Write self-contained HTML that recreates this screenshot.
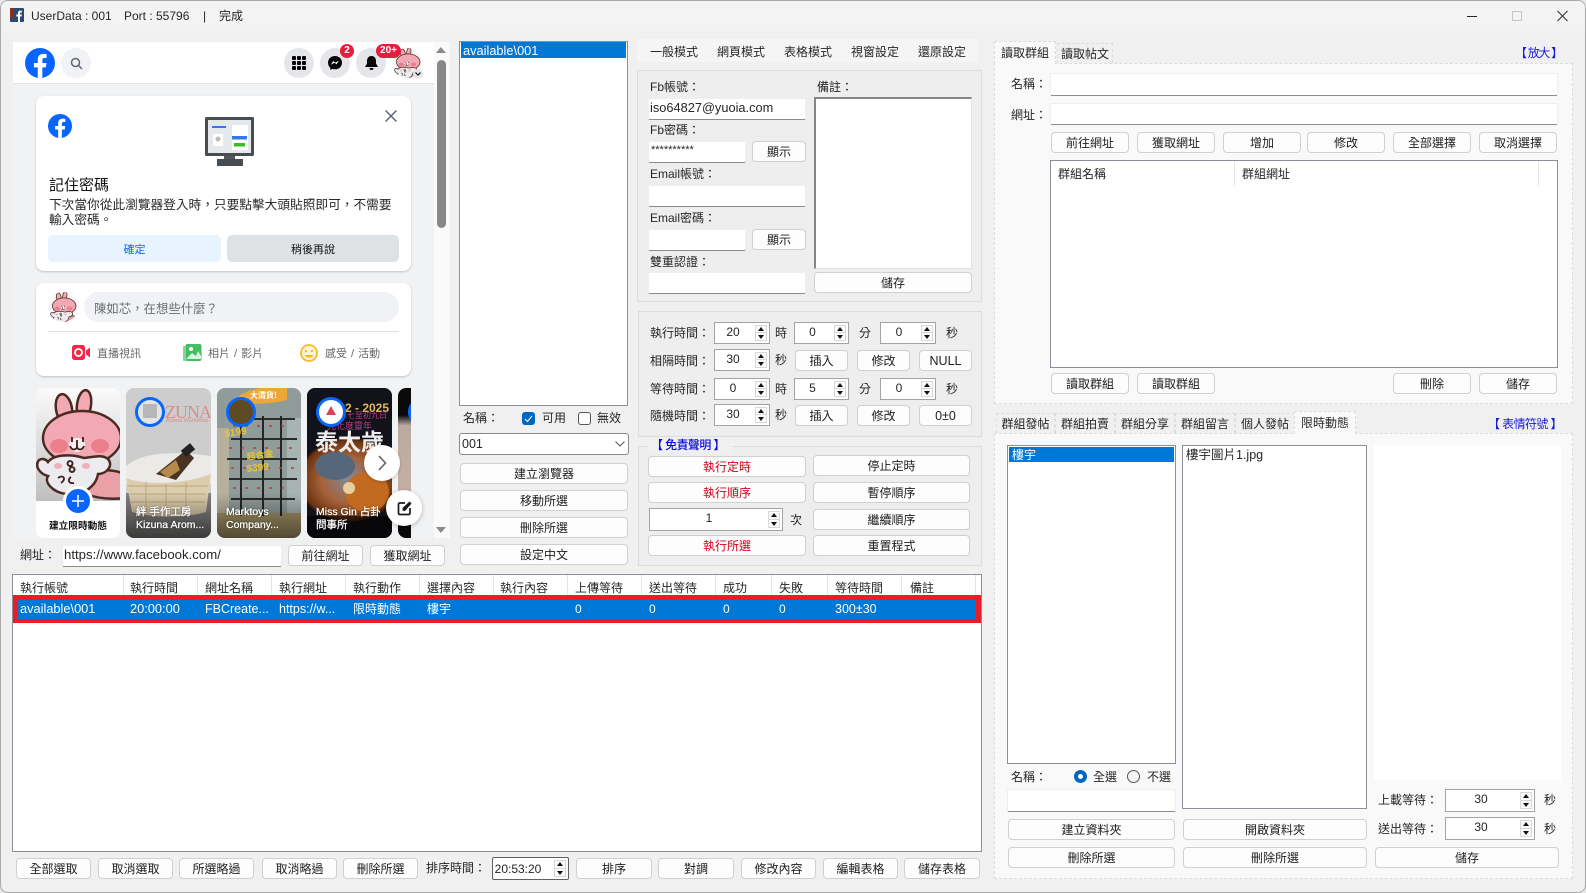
<!DOCTYPE html>
<html lang="zh-Hant"><head><meta charset="utf-8"><title>UserData</title>
<style>
html,body{margin:0;padding:0;background:#e8e8e8}
#w{position:relative;width:1586px;height:893px;overflow:hidden;background:#f0f0f0;font-family:"Liberation Sans","Noto Sans CJK TC",sans-serif;font-size:12px;color:#262626;box-sizing:border-box;border:1px solid #a9a9a9;border-radius:8px 8px 8px 8px}
#in{position:absolute;left:-1px;top:-1px;width:1586px;height:893px}
.a,.t,.b,.i,.s,.p,.tab{position:absolute;box-sizing:border-box}
.t{white-space:nowrap;line-height:16px}
.b{background:#fdfdfd;border:1px solid #d0d0d0;border-radius:4px;text-align:center;display:flex;align-items:center;justify-content:center;white-space:nowrap;color:#1d1d1d}
.r{color:#d0021b}
.i{background:#fff;border:1px solid #efefef;border-bottom:1px solid #8b8b8b;border-radius:2px;padding-left:3px;line-height:18px;white-space:nowrap}
.p{background:#eeeeee;border:1px solid #dcdcdc}
.s{background:#fff;border:1px solid #a3a3a3}
.s span{position:absolute;left:0;top:0;bottom:3px;right:18px;display:flex;align-items:center;justify-content:center}
.s i,.s u{position:absolute;right:2px;width:12px;height:9px;background:#fbfbfb;border:1px solid #d8d8d8;box-sizing:border-box}
.s i{top:2px}.s u{bottom:2px}
.s i:after,.s u:after{content:"";position:absolute;left:2px;width:0;height:0;border-left:3px solid transparent;border-right:3px solid transparent}
.s i:after{top:1px;border-bottom:4px solid #111}
.s u:after{top:2px;border-top:4px solid #111}
.tab{border:1px dashed #dcdcdc;border-bottom:none;background:#f0f0f0;text-align:center;line-height:20px;white-space:nowrap}
.sel{background:#f9f9f9;line-height:22px;z-index:2}
.h{position:absolute;top:575px;width:1px;height:20px;background:#e5e5e5}
.k{color:#fff;position:absolute;top:601px;line-height:16px;white-space:nowrap;font-size:12px}
.ring{position:absolute;border-radius:50%;border:3px solid #0866ff;background:#eee;box-sizing:border-box;width:30px;height:30px}
.fb{color:#65676b;font-size:11px;word-spacing:1px}
.w{color:#fff;font-size:10.500px;-webkit-text-stroke:.25px #fff;text-shadow:0 0 2px #000a}
</style></head><body>
<div id="w"><div id="in">

<!-- title bar -->
<div class="a" style="left:0;top:0;width:1586px;height:31px;background:#f3f3f3"></div>
<svg class="a" style="left:10px;top:8px" width="14" height="14"><rect width="14" height="14" rx="1" fill="#2b4a72"/><rect width="3" height="10" fill="#8c2f1e"/><path d="M8 14V8.500H6.300V6.400H8V5C8 3.400 9 2.600 10.300 2.600H11.800V4.600H10.800C10.100 4.600 10 5 10 5.500V6.400H11.800L11.500 8.500H10V14Z" fill="#fff"/></svg>
<div class="t" style="left:31px;top:8px">UserData : 001</div>
<div class="t" style="left:124px;top:8px">Port : 55796</div>
<div class="t" style="left:203px;top:8px">|</div>
<div class="t" style="left:219px;top:8px">完成</div>
<svg class="a" style="left:1460px;top:8px" width="120" height="16" fill="none"><path d="M7 8.500H17" stroke="#222" stroke-width="1"/><rect x="52.500" y="3.500" width="9" height="9" stroke="#c4c4c4"/><path d="M97.500 3L107.500 13M107.500 3L97.500 13" stroke="#333" stroke-width="1.100"/></svg>

<!-- facebook panel -->
<div class="a" style="left:13px;top:42px;width:421px;height:496px;background:#f0f2f3"></div>
<div class="a" style="left:434px;top:42px;width:16px;height:496px;background:#fafafa"></div>
<div class="a" style="left:13px;top:42px;width:421px;height:42px;background:#fff;border-bottom:1px solid #dfe3e6;box-sizing:border-box"></div>
<svg class="a" style="left:25px;top:48px" width="30" height="30" viewBox="0 0 36 36"><circle cx="18" cy="18" r="18" fill="#0866ff"/><path d="M25 23.200L25.800 18H20.800V14.600C20.800 13.200 21.500 11.800 23.700 11.800H26V7.400S24 7 22 7C17.900 7 15.300 9.500 15.300 13.900V18H10.700V23.200H15.300V35.700C16.200 35.900 17.100 36 18 36S19.900 35.900 20.800 35.700V23.200Z" fill="#fff"/></svg>
<div class="a" style="left:61px;top:48px;width:30px;height:30px;border-radius:50%;background:#f0f2f5"></div>
<svg class="a" style="left:70px;top:57px" width="13" height="13" fill="none" stroke="#606770" stroke-width="1.500"><circle cx="5.500" cy="5.500" r="4"/><path d="M8.500 8.500L12 12"/></svg>
<div class="a" style="left:284px;top:48px;width:30px;height:30px;border-radius:50%;background:#e4e6e9"></div>
<svg class="a" style="left:292px;top:56px" width="14" height="14" fill="#050505"><rect x="0" y="0" width="4" height="4" rx="1"/><rect x="5" y="0" width="4" height="4" rx="1"/><rect x="10" y="0" width="4" height="4" rx="1"/><rect x="0" y="5" width="4" height="4" rx="1"/><rect x="5" y="5" width="4" height="4" rx="1"/><rect x="10" y="5" width="4" height="4" rx="1"/><rect x="0" y="10" width="4" height="4" rx="1"/><rect x="5" y="10" width="4" height="4" rx="1"/><rect x="10" y="10" width="4" height="4" rx="1"/></svg>
<div class="a" style="left:320px;top:48px;width:30px;height:30px;border-radius:50%;background:#e4e6e9"></div>
<svg class="a" style="left:328px;top:56px" width="14" height="14"><path d="M7 0C3 0 0 2.900 0 6.800C0 8.900 .900 10.700 2.300 11.900V14L4.400 12.900C5.200 13.200 6.100 13.300 7 13.300C11 13.300 14 10.500 14 6.700S11 0 7 0Z" fill="#050505"/><path d="M2.800 8.700L5.300 5L7.300 6.600L10.900 4.700L8.500 8.300L6.500 6.800Z" fill="#fff"/></svg>
<div class="a" style="left:356px;top:48px;width:30px;height:30px;border-radius:50%;background:#e4e6e9"></div>
<svg class="a" style="left:365px;top:56px" width="13" height="15"><path d="M6.500 0C3.500 0 2 2.300 2 5V7.500L0 11H13L11 7.500V5C11 2.300 9.500 0 6.500 0Z" fill="#050505"/><path d="M4.500 12A2 2 0 008.500 12Z" fill="#050505"/></svg>
<div class="a" style="left:340px;top:44px;width:14px;height:14px;border-radius:50%;background:#e41e3f;color:#fff;font-weight:700;font-size:10px;line-height:14px;text-align:center">2</div>
<div class="a" style="left:376px;top:44px;width:25px;height:14px;border-radius:7px;background:#e41e3f;color:#fff;font-weight:700;font-size:10px;line-height:14px;text-align:center;z-index:3">20+</div>

<svg width="0" height="0" style="position:absolute"><defs>
<symbol id="rab" viewBox="0 0 84 113">
<g stroke="#4b2a22" stroke-width="2.500">
<ellipse cx="28" cy="21" rx="8" ry="15" transform="rotate(-10 28 21)" fill="#f3a9b4"/>
<ellipse cx="48" cy="17" rx="7" ry="15" transform="rotate(8 48 17)" fill="#f3a9b4"/>
<ellipse cx="46" cy="50" rx="39" ry="27" fill="#f3a9b4"/>
<path d="M50 85C66 80 84 82 90 88V110C72 112 60 110 50 106Z" fill="#e9a0a6"/>
<path d="M12 74C18 66 36 66 48 70C58 69 66 66 72 71C78 78 70 86 62 86C60 98 48 108 30 106C16 104 8 94 12 88C4 86-2 78 3 72C6 70 10 71 12 74Z" fill="#ececf0"/>
</g>
<ellipse cx="23" cy="58" rx="9" ry="7" fill="#ec7f8c"/><ellipse cx="64" cy="58" rx="9" ry="7" fill="#ec7f8c"/>
<ellipse cx="41" cy="57" rx="8" ry="7" fill="#fbeef0"/>
<path d="M36 49V54M47 49V54M41 52V59M34 58C36 63 40 62 41 59C42 62 46 63 48 58" stroke="#3a2018" stroke-width="1.800" fill="none"/>
<ellipse cx="22" cy="78" rx="4" ry="3" fill="#eeb0b8"/><ellipse cx="50" cy="78" rx="4" ry="3" fill="#eeb0b8"/>
<path d="M34 73a2.500 2.500 0 1 0 .1 0M36 79a2.500 2.500 0 1 0 .1 0M22 90C27 86 31 91 25 95M35 89C31 92 33 96 38 95" stroke="#3a2018" stroke-width="1.800" fill="none"/>
</symbol>
</defs></svg>

<div class="a" style="left:392px;top:48px;width:30px;height:30px;border-radius:50%;background:#f7f7f7;overflow:hidden"><svg width="30" height="34" style="margin:-1px 0 0 0"><use href="#rab"/></svg></div>
<div class="a" style="left:413px;top:69px;width:10px;height:10px;border-radius:50%;background:#e4e6e9"></div>
<svg class="a" style="left:415px;top:72px" width="6" height="4" fill="none" stroke="#111" stroke-width="1.200"><path d="M.5 .5L3 3L5.500 .5"/></svg>

<!-- scrollbar -->
<svg class="a" style="left:435px;top:46px" width="12" height="8"><path d="M1 7L5.800 1L11 7Z" fill="#8a8a8a"/></svg>
<div class="a" style="left:437px;top:60px;width:9px;height:168px;border-radius:5px;background:#888"></div>
<svg class="a" style="left:435px;top:526px" width="12" height="8"><path d="M1 1L5.800 7L11 1Z" fill="#8a8a8a"/></svg>

<!-- card remember -->
<div class="a" style="left:36px;top:96px;width:375px;height:175px;background:#fff;border-radius:8px;box-shadow:0 1px 2px #0003"></div>
<svg class="a" style="left:48px;top:114px" width="24" height="24" viewBox="0 0 36 36"><circle cx="18" cy="18" r="18" fill="#0866ff"/><path d="M25 23.200L25.800 18H20.800V14.600C20.800 13.200 21.500 11.800 23.700 11.800H26V7.400S24 7 22 7C17.900 7 15.300 9.500 15.300 13.900V18H10.700V23.200H15.300V35.700C16.200 35.900 17.100 36 18 36S19.900 35.900 20.800 35.700V23.200Z" fill="#fff"/></svg>
<svg class="a" style="left:385px;top:110px" width="12" height="12" stroke="#606770" stroke-width="1.500"><path d="M.5 .5L11.500 11.500M11.500 .5L.5 11.500"/></svg>
<svg class="a" style="left:205px;top:117px" width="50" height="50"><rect width="49" height="39" rx="1.500" fill="#484d52"/><rect x="3" y="3" width="43" height="33" fill="#e6e9ec"/><rect x="7" y="9" width="14" height="2" fill="#3578e5"/><rect x="8" y="17" width="10" height="12" fill="#fff"/><circle cx="13" cy="22" r="2.500" fill="#bbb"/><rect x="27" y="8" width="16" height="25" fill="#fff"/><rect x="27" y="19" width="15" height="3.500" fill="#3578e5"/><rect x="29" y="26" width="11" height="3.500" fill="#42b72a"/><rect x="19" y="39" width="11" height="3" fill="#555"/><rect x="12" y="42" width="26" height="7" fill="#484d52"/></svg>
<div class="t" style="left:49px;top:178px;font-size:15px;color:#111">記住密碼</div>
<div class="t" style="left:49px;top:197px;font-size:12.700px;color:#2a2a2a">下次當你從此瀏覽器登入時，只要點擊大頭貼照即可，不需要</div>
<div class="t" style="left:49px;top:212px;font-size:12.700px;color:#2a2a2a">輸入密碼。</div>
<div class="a" style="left:48px;top:235px;width:173px;height:27px;background:#e7f3ff;border-radius:5px;text-align:center;line-height:30px;color:#0866ff;font-size:11px">確定</div>
<div class="a" style="left:227px;top:235px;width:172px;height:27px;background:#dfe2e5;border-radius:5px;text-align:center;line-height:30px;color:#111;font-size:11px">稍後再說</div>

<!-- composer -->
<div class="a" style="left:36px;top:283px;width:375px;height:93px;background:#fff;border-radius:8px;box-shadow:0 1px 2px #0003"></div>
<div class="a" style="left:48px;top:292px;width:30px;height:30px;border-radius:50%;background:#f7f7f7;overflow:hidden"><svg width="30" height="34" style="margin-top:-1px"><use href="#rab"/></svg></div>
<div class="a" style="left:84px;top:292px;width:315px;height:30px;border-radius:15px;background:#f0f2f5"></div>
<div class="t" style="left:94px;top:301px;font-size:12.400px;color:#6b6d71">陳如芯，在想些什麼？</div>
<div class="a" style="left:48px;top:331px;width:351px;height:1px;background:#dfe1e4"></div>
<svg class="a" style="left:72px;top:345px" width="19" height="16"><rect width="13" height="15" rx="2.500" fill="#f02849"/><circle cx="6.500" cy="7.500" r="3.500" fill="none" stroke="#fff" stroke-width="1.800"/><path d="M14 5.500L18 2.500V12.500L14 9.500Z" fill="#f02849"/></svg>
<div class="t fb" style="left:97px;top:346px">直播視訊</div>
<svg class="a" style="left:183px;top:344px" width="19" height="18"><rect x="2.500" y="0" width="16" height="17" rx="2" fill="#45bd62"/><rect x="0" y="2" width="3" height="15" rx="1" fill="#7dd79a"/><circle cx="8" cy="5" r="2" fill="#fff"/><path d="M3 15L9 9L13 12L15 7L18 12V15Z" fill="#d7f5df"/></svg>
<div class="t fb" style="left:208px;top:346px">相片 / 影片</div>
<svg class="a" style="left:300px;top:344px" width="18" height="18" fill="none"><circle cx="9" cy="9" r="8" stroke="#f7b928" stroke-width="1.800" fill="#fff6d8"/><circle cx="6" cy="7" r="1.200" fill="#f7b928"/><circle cx="12" cy="7" r="1.200" fill="#f7b928"/><path d="M4.500 11C6 14.500 12 14.500 13.500 11Z" fill="#f7b928"/></svg>
<div class="t fb" style="left:325px;top:346px">感受 / 活動</div>

<!-- stories -->
<div class="a" style="left:36px;top:388px;width:84px;height:150px;border-radius:8px;background:#fff;overflow:hidden">
  <svg width="84" height="113" style="display:block"><defs><linearGradient id="g1" x1="0" y1="0" x2="0" y2="1"><stop offset="0" stop-color="#fbfbfb"/><stop offset="1" stop-color="#bfbfbf"/></linearGradient></defs><rect width="84" height="113" fill="url(#g1)"/><use href="#rab" width="84" height="113"/></svg>
</div>
<div class="a" style="left:63px;top:486px;width:24px;height:24px;border-radius:50%;background:#0866ff;border:3px solid #fff;box-sizing:content-box"></div>
<svg class="a" style="left:71px;top:494px" width="14" height="14" stroke="#fff" stroke-width="1.500"><path d="M7 1V13M1 7H13"/></svg>
<div class="t" style="left:36px;width:84px;text-align:center;top:519px;font-size:9.700px;font-weight:700;color:#111">建立限時動態</div>

<div class="a" style="left:126px;top:388px;width:85px;height:150px;border-radius:8px;overflow:hidden;background:#cdcdcd">
 <svg width="85" height="150" style="display:block"><defs><linearGradient id="g2" x1="0" y1="0" x2="0" y2="1"><stop offset="0" stop-color="#000" stop-opacity="0"/><stop offset="1" stop-color="#000" stop-opacity=".55"/></linearGradient></defs>
 <rect y="105" width="85" height="45" fill="#83817f"/>
 <path d="M0 78C14 66 40 62 85 68V96H0Z" fill="#eceae7"/>
 <path d="M30 86L60 62L68 70L50 92Z" fill="#4a3320"/><rect x="56" y="58" width="12" height="8" transform="rotate(-40 62 62)" fill="#222"/>
 <path d="M34 84L50 72L54 82L42 90Z" fill="#b58a4a"/>
 <path d="M0 90C20 98 60 96 85 86L80 124C60 130 25 130 6 124Z" fill="#dccdad"/>
 <path d="M2 98H82M4 106H80M5 114H79M20 94V126M40 96V128M60 94V126" stroke="#b8a47e" stroke-width="1"/>
 <rect y="105" width="85" height="45" fill="url(#g2)"/></svg>
</div>
<div class="t" style="left:165px;top:402px;font:18px 'Liberation Serif',serif;letter-spacing:-1px;color:#d98d8d;white-space:nowrap;width:46px;overflow:hidden">ZUNA</div>
<div class="t" style="left:166px;top:417px;font-size:5.500px;line-height:8px;color:#d98d8d">Aroma Workshop</div>
<div class="ring" style="left:135px;top:397px;background:#e4e4e4"><div style="margin:4px 5px;width:14px;height:14px;background:#9a9a9a;opacity:.6"></div></div>
<div class="t w" style="left:136px;top:504px">絆 手作工房</div>
<div class="t w" style="left:136px;top:517px">Kizuna Arom...</div>

<div class="a" style="left:217px;top:388px;width:84px;height:150px;border-radius:8px;overflow:hidden;background:#7d8a8c">
 <svg width="84" height="150" style="display:block"><defs><linearGradient id="g3" x1="0" y1="0" x2="0" y2="1"><stop offset="0" stop-color="#000" stop-opacity="0"/><stop offset="1" stop-color="#000" stop-opacity=".5"/></linearGradient></defs>
 <rect width="84" height="150" fill="#8f9c9a"/>
 <rect x="0" y="40" width="12" height="110" fill="#b7b09c"/><rect x="70" y="30" width="14" height="120" fill="#a7b4b2"/>
 <rect x="0" y="125" width="84" height="25" fill="#a59468"/>
 <path d="M22 8C36-2 60-2 70 0V12C56 16 36 16 22 16Z" fill="#eda63a"/>
 <path d="M20 30H78V32H20ZM14 50H80V52H14ZM10 70H80V72H10ZM12 90H80V92H12ZM14 110H78V112H14Z" fill="#2b2b2b"/>
 <path d="M24 28V128M46 28V128M64 28V128" stroke="#262626" stroke-width="2"/>
 <path d="M16 38H76M12 60H78M14 80H78M16 100H76" stroke="#d93025" stroke-width="1.500" stroke-dasharray="3 9"/>
 <text x="8" y="49" font-size="10" font-weight="700" fill="#e9c62e" transform="rotate(-8 8 49)" font-family="Liberation Sans">$199</text>
 <text x="30" y="72" font-size="9" font-weight="700" fill="#e9c62e" transform="rotate(-8 30 72)" font-family="Noto Sans CJK TC">超合金</text>
 <text x="30" y="84" font-size="10" font-weight="700" fill="#e9c62e" transform="rotate(-6 30 84)" font-family="Liberation Sans">$399</text>
 <text x="33" y="10" font-size="8" font-weight="700" fill="#fff" font-family="Noto Sans CJK TC">大清貨!</text>
 <rect y="105" width="84" height="45" fill="url(#g3)"/></svg>
</div>
<div class="ring" style="left:226px;top:397px;background:#5c4a22"></div>
<div class="t w" style="left:226px;top:504px">Marktoys</div>
<div class="t w" style="left:226px;top:517px">Company...</div>

<div class="a" style="left:307px;top:388px;width:85px;height:150px;border-radius:8px;overflow:hidden;background:#0c0c10">
 <svg width="85" height="150" style="display:block"><defs><radialGradient id="g4" cx=".5" cy=".5" r=".55"><stop offset="0" stop-color="#7f8a98"/><stop offset=".5" stop-color="#a6623a"/><stop offset=".85" stop-color="#6e3410"/><stop offset="1" stop-color="#0c0c10" stop-opacity="0"/></radialGradient></defs>
 <rect width="85" height="150" fill="#12121a"/>
 <ellipse cx="42" cy="92" rx="50" ry="42" fill="url(#g4)"/>
 <ellipse cx="60" cy="104" rx="22" ry="20" fill="#c26a20"/>
 <ellipse cx="28" cy="78" rx="20" ry="14" fill="#56677c"/>
 <circle cx="42" cy="100" r="6" fill="#e8d0a0"/>
 <rect y="128" width="85" height="22" fill="#000" opacity=".55"/></svg>
</div>
<div class="t" style="left:345px;top:400px;font-weight:700;font-size:12px;color:#e2b95a">2 - 2025</div>
<div class="t" style="left:318px;top:408px;font-size:8px;color:#c23a8a;white-space:nowrap;width:68px;overflow:hidden;padding-left:29px;box-sizing:border-box">七至初九日</div>
<div class="t" style="left:327px;top:418px;font-size:9px;color:#c23a8a;white-space:nowrap">光化度靈年</div>
<div class="t" style="left:315px;top:429px;font-size:23px;line-height:26px;font-weight:700;color:#eee;white-space:nowrap;width:74px;overflow:hidden">泰太歲</div>
<div class="ring" style="left:316px;top:397px;background:#fff"><div style="margin:6px 0 0 7px;width:0;height:0;border-left:5px solid transparent;border-right:5px solid transparent;border-bottom:9px solid #d9435c"></div></div>
<div class="t w" style="left:316px;top:504px">Miss Gin 占卦</div>
<div class="t w" style="left:316px;top:517px">問事所</div>

<div class="a" style="left:398px;top:388px;width:13px;height:150px;border-radius:8px 0 0 8px;overflow:hidden;background:linear-gradient(#0a0a0a 0,#0a0a0a 18%,#b9aaa0 25%,#c9b1a6 80%,#0a0a0a 88%)"></div>
<div class="a" style="left:408px;top:397px;width:30px;height:30px;border-radius:50%;border:3px solid #0866ff;box-sizing:border-box;clip-path:inset(0 27px 0 0)"></div>

<div class="a" style="left:364px;top:445px;width:36px;height:36px;border-radius:50%;background:#fff;box-shadow:0 1px 3px #0003"></div>
<svg class="a" style="left:378px;top:455px" width="9" height="16" fill="none" stroke="#606770" stroke-width="1.600"><path d="M1 1L7.500 8L1 15"/></svg>
<div class="a" style="left:386px;top:490px;width:36px;height:36px;border-radius:50%;background:#fff;box-shadow:0 1px 5px #0004"></div>
<svg class="a" style="left:397px;top:501px" width="15" height="15" fill="none" stroke="#1c1c1c" stroke-width="1.700"><path d="M8 2H3C2 2 1.500 2.500 1.500 3.500V12C1.500 13 2 13.500 3 13.500H11.500C12.500 13.500 13 13 13 12V7"/><path d="M6 9.500V7L12.500 1L14 2.500L8 9.500Z" fill="#1c1c1c" stroke-width=".8"/></svg>

<!-- url row -->
<div class="t" style="left:20px;top:547px">網址：</div>
<div class="i" style="left:62px;top:545px;width:220px;height:22px;padding-left:1px;line-height:18px;font-size:13.200px">https://www.facebook.com/</div>
<div class="b" style="left:288px;top:545px;width:75px;height:21px">前往網址</div>
<div class="b" style="left:370px;top:545px;width:75px;height:21px">獲取網址</div>

<!-- list -->
<div class="a" style="left:459px;top:41px;width:169px;height:365px;background:#fff;border:1px solid #8a8f99;box-sizing:border-box"></div>
<div class="a" style="left:461px;top:42px;width:165px;height:16px;background:#0078d7;color:#fff;line-height:17px;padding-left:2px;box-sizing:border-box;font-size:12.800px">available\001</div>
<div class="t" style="left:463px;top:410px">名稱：</div>
<div class="a" style="left:522px;top:412px;width:13px;height:13px;background:#0067c0;border-radius:3px"></div>
<svg class="a" style="left:524px;top:414px" width="9" height="9" fill="none" stroke="#fff" stroke-width="1"><path d="M1 5L3.500 7.500L8 2"/></svg>
<div class="t" style="left:542px;top:410px">可用</div>
<div class="a" style="left:578px;top:412px;width:13px;height:13px;background:#fdfdfd;border:1px solid #555;border-radius:3px;box-sizing:border-box"></div>
<div class="t" style="left:597px;top:410px">無效</div>
<div class="a" style="left:459px;top:433px;width:170px;height:22px;background:#fff;border:1px solid #8a8a8a;border-radius:3px;box-sizing:border-box;line-height:20px;padding-left:2px;font-size:12.500px">001</div>
<svg class="a" style="left:615px;top:441px" width="10" height="6" fill="none" stroke="#555"><path d="M.5 .5L5 5L9.500 .5"/></svg>
<div class="b" style="left:460px;top:463px;width:168px;height:21px">建立瀏覽器</div>
<div class="b" style="left:460px;top:490px;width:168px;height:21px">移動所選</div>
<div class="b" style="left:460px;top:517px;width:168px;height:21px">刪除所選</div>
<div class="b" style="left:460px;top:544px;width:168px;height:21px">設定中文</div>

<!-- mode tabs -->
<div class="a" style="left:637px;top:39px;width:341px;height:23px;background:#f5f5f5"></div>
<div class="t" style="left:650px;top:44px">一般模式</div>
<div class="t" style="left:717px;top:44px">網頁模式</div>
<div class="t" style="left:784px;top:44px">表格模式</div>
<div class="t" style="left:851px;top:44px">視窗設定</div>
<div class="t" style="left:918px;top:44px">還原設定</div>

<!-- panel 1 -->
<div class="p" style="left:637px;top:70px;width:345px;height:232px"></div>
<div class="t" style="left:650px;top:79px">Fb帳號：</div>
<div class="i" style="left:648px;top:98px;width:158px;height:22px;padding-left:1px;line-height:18px;font-size:12.800px">iso64827@yuoia.com</div>
<div class="t" style="left:650px;top:122px">Fb密碼：</div>
<div class="i" style="left:648px;top:141px;width:98px;height:22px;padding-left:2px;line-height:16px;font-size:11px">**********</div>
<div class="b" style="left:752px;top:141px;width:54px;height:21px">顯示</div>
<div class="t" style="left:650px;top:166px">Email帳號：</div>
<div class="i" style="left:648px;top:185px;width:158px;height:22px"></div>
<div class="t" style="left:650px;top:210px">Email密碼：</div>
<div class="i" style="left:648px;top:229px;width:98px;height:22px"></div>
<div class="b" style="left:752px;top:229px;width:54px;height:21px">顯示</div>
<div class="t" style="left:650px;top:254px">雙重認證：</div>
<div class="i" style="left:648px;top:272px;width:158px;height:22px"></div>
<div class="t" style="left:817px;top:79px">備註：</div>
<div class="a" style="left:814px;top:97px;width:158px;height:172px;background:#fff;border:1px solid #e3e3e3;border-top:2px solid #858585;border-left:2px solid #858585;box-sizing:border-box"></div>
<div class="b" style="left:814px;top:272px;width:158px;height:21px">儲存</div>

<!-- panel 2 -->
<div class="p" style="left:638px;top:311px;width:344px;height:126px"></div>
<div class="t" style="left:650px;top:325px">執行時間：</div>
<div class="s" style="left:714px;top:322px;width:56px;height:22px"><span>20</span><i></i><u></u></div>
<div class="t" style="left:775px;top:325px">時</div>
<div class="s" style="left:794px;top:322px;width:55px;height:22px"><span>0</span><i></i><u></u></div>
<div class="t" style="left:859px;top:325px">分</div>
<div class="s" style="left:880px;top:322px;width:56px;height:22px"><span>0</span><i></i><u></u></div>
<div class="t" style="left:946px;top:325px">秒</div>
<div class="t" style="left:650px;top:353px">相隔時間：</div>
<div class="s" style="left:714px;top:349px;width:56px;height:22px"><span>30</span><i></i><u></u></div>
<div class="t" style="left:775px;top:352px">秒</div>
<div class="b" style="left:795px;top:350px;width:53px;height:21px">插入</div>
<div class="b" style="left:857px;top:350px;width:53px;height:21px">修改</div>
<div class="b" style="left:919px;top:350px;width:53px;height:21px;font-size:12.500px">NULL</div>
<div class="t" style="left:650px;top:381px">等待時間：</div>
<div class="s" style="left:714px;top:378px;width:56px;height:22px"><span>0</span><i></i><u></u></div>
<div class="t" style="left:775px;top:381px">時</div>
<div class="s" style="left:794px;top:378px;width:55px;height:22px"><span>5</span><i></i><u></u></div>
<div class="t" style="left:859px;top:381px">分</div>
<div class="s" style="left:880px;top:378px;width:56px;height:22px"><span>0</span><i></i><u></u></div>
<div class="t" style="left:946px;top:381px">秒</div>
<div class="t" style="left:650px;top:408px">隨機時間：</div>
<div class="s" style="left:714px;top:404px;width:56px;height:22px"><span>30</span><i></i><u></u></div>
<div class="t" style="left:775px;top:407px">秒</div>
<div class="b" style="left:795px;top:405px;width:53px;height:21px">插入</div>
<div class="b" style="left:857px;top:405px;width:53px;height:21px">修改</div>
<div class="b" style="left:919px;top:405px;width:53px;height:21px;font-size:12.500px">0±0</div>

<!-- panel 3 -->
<div class="p" style="left:638px;top:446px;width:344px;height:120px"></div>
<div class="t" style="left:648px;top:437px;background:#f0f0f0;color:#0a0ae0;padding:0 8px 0 3px;font-weight:500;letter-spacing:-.6px">【 免責聲明 】</div>
<div class="b r" style="left:648px;top:456px;width:158px;height:21px">執行定時</div>
<div class="b" style="left:813px;top:455px;width:157px;height:21px">停止定時</div>
<div class="b r" style="left:648px;top:482px;width:158px;height:21px">執行順序</div>
<div class="b" style="left:813px;top:482px;width:157px;height:21px">暫停順序</div>
<div class="s" style="left:649px;top:508px;width:134px;height:23px"><span style="right:14px">1</span><i></i><u></u></div>
<div class="t" style="left:790px;top:512px">次</div>
<div class="b" style="left:813px;top:509px;width:157px;height:21px">繼續順序</div>
<div class="b r" style="left:648px;top:535px;width:158px;height:21px">執行所選</div>
<div class="b" style="left:813px;top:535px;width:157px;height:21px">重置程式</div>

<!-- top right tab -->
<div class="a" style="left:994px;top:63px;width:579px;height:341px;background:#f9f9f9;border:1px dashed #dcdcdc;box-sizing:border-box"></div>
<div class="tab sel" style="left:994px;top:41px;width:62px;height:23px">讀取群組</div>
<div class="tab" style="left:1057px;top:43px;width:56px;height:20px">讀取帖文</div>
<div class="t" style="left:1515px;top:45px;color:#1818e0;letter-spacing:-1.300px">【 放大 】</div>
<div class="t" style="left:1011px;top:76px">名稱：</div>
<div class="i" style="left:1050px;top:73px;width:508px;height:23px"></div>
<div class="t" style="left:1011px;top:107px">網址：</div>
<div class="i" style="left:1050px;top:103px;width:508px;height:22px"></div>
<div class="b" style="left:1051px;top:132px;width:78px;height:21px">前往網址</div>
<div class="b" style="left:1137px;top:132px;width:78px;height:21px">獲取網址</div>
<div class="b" style="left:1223px;top:132px;width:78px;height:21px">增加</div>
<div class="b" style="left:1307px;top:132px;width:78px;height:21px">修改</div>
<div class="b" style="left:1393px;top:132px;width:78px;height:21px">全部選擇</div>
<div class="b" style="left:1479px;top:132px;width:78px;height:21px">取消選擇</div>
<div class="a" style="left:1050px;top:160px;width:508px;height:208px;background:#fff;border:1px solid #8a8f99;box-sizing:border-box"></div>
<div class="t" style="left:1058px;top:166px">群組名稱</div>
<div class="a" style="left:1234px;top:162px;width:1px;height:24px;background:#e5e5e5"></div>
<div class="t" style="left:1242px;top:166px">群組網址</div>
<div class="a" style="left:1538px;top:162px;width:1px;height:24px;background:#e5e5e5"></div>
<div class="b" style="left:1051px;top:373px;width:78px;height:21px">讀取群組</div>
<div class="b" style="left:1137px;top:373px;width:78px;height:21px">讀取群組</div>
<div class="b" style="left:1393px;top:373px;width:78px;height:21px">刪除</div>
<div class="b" style="left:1479px;top:373px;width:78px;height:21px">儲存</div>

<!-- bottom right tab -->
<div class="a" style="left:994px;top:433px;width:579px;height:446px;background:#f9f9f9;border:1px dashed #dcdcdc;box-sizing:border-box"></div>
<div class="tab" style="left:996px;top:413px;width:59px;height:20px">群組發帖</div>
<div class="tab" style="left:1055px;top:413px;width:60px;height:20px">群組拍賣</div>
<div class="tab" style="left:1115px;top:413px;width:60px;height:20px">群組分享</div>
<div class="tab" style="left:1175px;top:413px;width:60px;height:20px">群組留言</div>
<div class="tab" style="left:1235px;top:413px;width:60px;height:20px">個人發帖</div>
<div class="tab sel" style="left:1294px;top:411px;width:62px;height:23px">限時動態</div>
<div class="t" style="left:1488px;top:416px;color:#1818e0;letter-spacing:-.6px">【 表情符號 】</div>
<div class="a" style="left:1007px;top:445px;width:169px;height:319px;background:#fff;border:1px solid #8a8f99;box-sizing:border-box"></div>
<div class="a" style="left:1009px;top:447px;width:165px;height:15px;background:#0078d7;color:#fff;line-height:16px;padding-left:3px;box-sizing:border-box">樓宇</div>
<div class="a" style="left:1182px;top:445px;width:185px;height:364px;background:#fff;border:1px solid #8a8f99;box-sizing:border-box"></div>
<div class="t" style="left:1186px;top:447px;font-size:12.500px">樓宇圖片1.jpg</div>
<div class="a" style="left:1374px;top:445px;width:187px;height:335px;background:#fff"></div>
<div class="t" style="left:1011px;top:769px">名稱：</div>
<div class="a" style="left:1074px;top:770px;width:13px;height:13px;border-radius:50%;border:4px solid #0067c0;background:#fff;box-sizing:border-box"></div>
<div class="t" style="left:1093px;top:769px">全選</div>
<div class="a" style="left:1127px;top:770px;width:13px;height:13px;border-radius:50%;border:1px solid #555;background:#f5f5f5;box-sizing:border-box"></div>
<div class="t" style="left:1147px;top:769px">不選</div>
<div class="i" style="left:1007px;top:789px;width:169px;height:23px"></div>
<div class="b" style="left:1008px;top:819px;width:167px;height:21px">建立資料夾</div>
<div class="b" style="left:1183px;top:819px;width:184px;height:21px">開啟資料夾</div>
<div class="b" style="left:1008px;top:847px;width:167px;height:21px">刪除所選</div>
<div class="b" style="left:1183px;top:847px;width:184px;height:21px">刪除所選</div>
<div class="b" style="left:1375px;top:847px;width:184px;height:21px">儲存</div>
<div class="t" style="left:1378px;top:792px">上載等待：</div>
<div class="s" style="left:1445px;top:789px;width:90px;height:23px"><span>30</span><i></i><u></u></div>
<div class="t" style="left:1544px;top:792px">秒</div>
<div class="t" style="left:1378px;top:821px">送出等待：</div>
<div class="s" style="left:1445px;top:817px;width:90px;height:23px"><span>30</span><i></i><u></u></div>
<div class="t" style="left:1544px;top:821px">秒</div>

<!-- table -->
<div class="a" style="left:12px;top:574px;width:970px;height:278px;background:#fff;border:1px solid #8a8f99;box-sizing:border-box"></div>
<div class="h" style="left:123px"></div><div class="h" style="left:197px"></div><div class="h" style="left:271px"></div><div class="h" style="left:345px"></div><div class="h" style="left:419px"></div><div class="h" style="left:493px"></div><div class="h" style="left:567px"></div><div class="h" style="left:641px"></div><div class="h" style="left:715px"></div><div class="h" style="left:771px"></div><div class="h" style="left:827px"></div><div class="h" style="left:901px"></div><div class="h" style="left:975px"></div>
<div class="t" style="left:20px;top:580px">執行帳號</div><div class="t" style="left:130px;top:580px">執行時間</div><div class="t" style="left:205px;top:580px">網址名稱</div><div class="t" style="left:279px;top:580px">執行網址</div><div class="t" style="left:353px;top:580px">執行動作</div><div class="t" style="left:427px;top:580px">選擇內容</div><div class="t" style="left:500px;top:580px">執行內容</div><div class="t" style="left:575px;top:580px">上傳等待</div><div class="t" style="left:649px;top:580px">送出等待</div><div class="t" style="left:723px;top:580px">成功</div><div class="t" style="left:779px;top:580px">失敗</div><div class="t" style="left:835px;top:580px">等待時間</div><div class="t" style="left:910px;top:580px">備註</div>
<div class="a" style="left:13px;top:595px;width:968px;height:28px;background:#ed1c24"></div>
<div class="a" style="left:18px;top:600px;width:958px;height:19px;background:#0078d7"></div>
<div class="k" style="left:20px;font-size:12.800px">available\001</div><div class="k" style="left:130px;font-size:12.800px">20:00:00</div><div class="k" style="left:205px;font-size:12.500px">FBCreate...</div><div class="k" style="left:279px;font-size:12.500px">https://w...</div><div class="k" style="left:353px">限時動態</div><div class="k" style="left:427px">樓宇</div><div class="k" style="left:575px">0</div><div class="k" style="left:649px">0</div><div class="k" style="left:723px">0</div><div class="k" style="left:779px">0</div><div class="k" style="left:835px;font-size:12.500px">300±30</div>

<!-- bottom buttons -->
<div class="b" style="left:16px;top:858px;width:75px;height:21px">全部選取</div>
<div class="b" style="left:98px;top:858px;width:75px;height:21px">取消選取</div>
<div class="b" style="left:179px;top:858px;width:75px;height:21px">所選略過</div>
<div class="b" style="left:262px;top:858px;width:75px;height:21px">取消略過</div>
<div class="b" style="left:343px;top:858px;width:75px;height:21px">刪除所選</div>
<div class="t" style="left:426px;top:860px">排序時間：</div>
<div class="s" style="left:492px;top:857px;width:77px;height:23px;border-color:#606060;border-radius:2px"><span style="right:auto;left:-3px;width:56px;bottom:0">20:53:20</span><i></i><u></u></div>
<div class="b" style="left:576px;top:858px;width:76px;height:21px">排序</div>
<div class="b" style="left:658px;top:858px;width:76px;height:21px">對調</div>
<div class="b" style="left:741px;top:858px;width:75px;height:21px">修改內容</div>
<div class="b" style="left:823px;top:858px;width:75px;height:21px">編輯表格</div>
<div class="b" style="left:904px;top:858px;width:76px;height:21px">儲存表格</div>

</div></div>
</body></html>
